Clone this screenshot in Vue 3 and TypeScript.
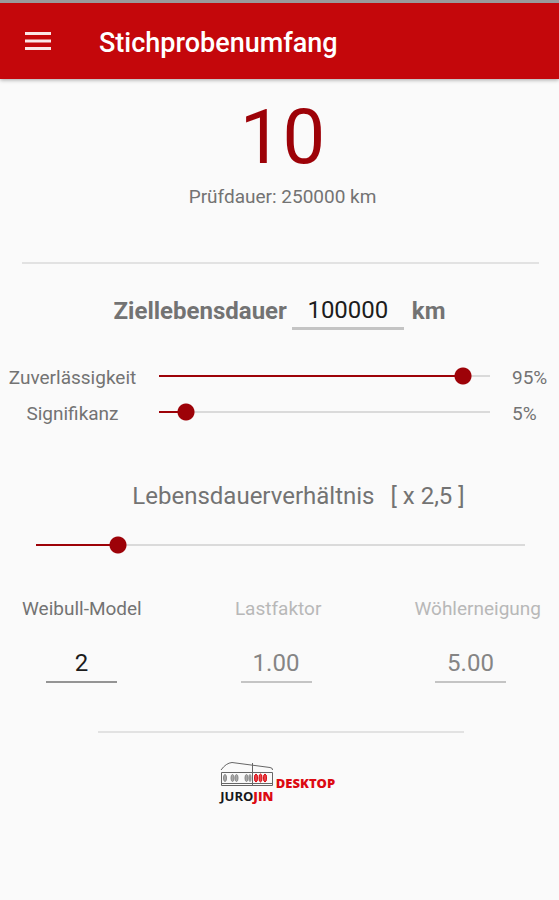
<script setup lang="ts">
import { computed, ref } from 'vue'

const target = ref('100000')
const reliability = ref(95)
const significance = ref(5)
const ratio = ref(2.5)
const weibull = ref('2')
const loadFactor = ref('1.00')
const woehler = ref('5.00')

const sampleSize = ref(10)
const testDuration = computed(() => Math.round(Number(target.value) * ratio.value))
const ratioText = computed(() => ratio.value.toLocaleString('de-DE'))

const fill = (value: number, min: number, max: number) => ({
  '--fill': (value - min) / (max - min),
})
</script>

<template>
  <div class="screen">
    <header class="bar">
      <button class="menu" type="button" aria-label="Menü">
        <svg width="26" height="20" viewBox="0 0 26 20" aria-hidden="true">
          <path d="M0 2.500h26M0 10h26M0 17.500h26" stroke="currentColor" stroke-width="3" />
        </svg>
      </button>
      <h1>Stichprobenumfang</h1>
    </header>

    <main>
      <section class="result">
        <output class="size">{{ sampleSize }}</output>
        <p>Prüfdauer: {{ testDuration }} km</p>
      </section>

      <hr />

      <div class="target">
        <label for="target">Ziellebensdauer</label>
        <input id="target" v-model="target" type="text" inputmode="numeric" />
        <span>km</span>
      </div>

      <div class="sliders">
        <label for="reliability">Zuverlässigkeit</label>
        <input
          id="reliability"
          v-model.number="reliability"
          type="range"
          min="0"
          max="100"
          :style="fill(reliability, 0, 100)"
        />
        <span>{{ reliability }}%</span>
        <label for="significance">Signifikanz</label>
        <input
          id="significance"
          v-model.number="significance"
          type="range"
          min="0"
          max="100"
          :style="fill(significance, 0, 100)"
        />
        <span>{{ significance }}%</span>
      </div>

      <div class="ratio">
        <label for="ratio">
          <span>Lebensdauerverhältnis</span>
          <span>[ x {{ ratioText }} ]</span>
        </label>
        <input
          id="ratio"
          v-model.number="ratio"
          type="range"
          min="1"
          max="11"
          step="0.1"
          :style="fill(ratio, 1, 11)"
        />
      </div>

      <div class="labels">
        <label for="weibull">Weibull-Model</label>
        <label class="off" for="load">Lastfaktor</label>
        <label class="off" for="woehler">Wöhlerneigung</label>
      </div>
      <div class="values">
        <input id="weibull" v-model="weibull" type="text" inputmode="decimal" />
        <input id="load" v-model="loadFactor" type="text" disabled />
        <input id="woehler" v-model="woehler" type="text" disabled />
      </div>

      <hr class="short" />

      <a class="logo" href="#">
        <span class="mark">
          <svg width="54" height="26" viewBox="0 0 54 26" aria-hidden="true">
            <g fill="none" stroke="#666" stroke-width="1">
              <path d="M1 9Q6 2 12 1.500L50 6.500Q53 7 52.500 9" />
              <path d="M1.500 11.500h51v13h-51zM1 22.500h51M32.500 2v22" />
            </g>
            <g fill="#aaa" stroke="#888">
              <ellipse cx="5" cy="17" rx="1.500" ry="3.500" />
              <ellipse cx="12.500" cy="17" rx="1.500" ry="3.500" />
              <ellipse cx="16.500" cy="17" rx="1.500" ry="3.500" />
              <ellipse cx="26.500" cy="17" rx="1.500" ry="3.500" />
              <ellipse cx="30" cy="17" rx="1" ry="3.500" />
            </g>
            <g fill="#e5484d" stroke="#dc0a12">
              <ellipse cx="36" cy="17" rx="1.500" ry="4" />
              <ellipse cx="40.500" cy="17" rx="1.500" ry="4" />
              <ellipse cx="45" cy="17" rx="1.500" ry="4" />
            </g>
          </svg>
          <span>JURO<b>JIN</b></span>
        </span>
        <b>DESKTOP</b>
      </a>
    </main>
  </div>
</template>

<style>
body {
  margin: 0;
  background: #fafafa;
}
</style>

<style scoped>
.screen {
  min-height: 100vh;
  background: #fafafa;
  color: #737373;
  font-family: Roboto, "Liberation Sans", sans-serif;
  font-size: 19px;
  line-height: 24px;
}

.bar {
  display: flex;
  align-items: center;
  gap: 48px;
  box-sizing: border-box;
  height: 79px;
  border-top: 3px solid #9a9a9c;
  padding: 0 25px;
  background: #c4070b;
  color: #fff;
  box-shadow: 0 1px 4px rgba(0, 0, 0, 0.35);
}

.menu {
  display: flex;
  padding: 0;
  border: 0;
  background: none;
  color: #fbe6e6;
}

h1 {
  margin: 0;
  padding-top: 3px;
  font-size: 27px;
  font-weight: 500;
  line-height: 32px;
}

main {
  display: flex;
  flex-direction: column;
}

.result {
  display: flex;
  flex-direction: column;
  align-items: center;
  gap: 8px;
  padding: 18px 0 53px 6px;
}

.size {
  color: #9d0208;
  font-size: 76px;
  line-height: 80px;
}

.result p {
  margin: 0;
}

hr {
  height: 2px;
  margin: 0 20px 0 22px;
  border: 0;
  background: #e2e2e2;
}

hr.short {
  margin: 48px 95px 0 98px;
}

input[type="text"] {
  box-sizing: border-box;
  padding: 0;
  border: 0;
  border-bottom: 2px solid #949494;
  border-radius: 0;
  background: none;
  color: #1c1c1c;
  font: inherit;
  font-size: 24px;
  text-align: center;
}

.target {
  display: flex;
  justify-content: center;
  align-items: center;
  margin-top: 28px;
  font-size: 24px;
  font-weight: 700;
}

.target input[type="text"] {
  width: 112px;
  height: 38px;
  margin: 0 8px 0 5px;
  border-bottom: 3px solid #c4c4c4;
  font-weight: 400;
}

.sliders {
  display: grid;
  grid-template-columns: 129px 1fr 37px;
  column-gap: 22px;
  row-gap: 10px;
  align-items: start;
  margin: 34px 10px 0 8px;
}

.sliders label,
.sliders span {
  padding-top: 2px;
}

.sliders label {
  text-align: center;
}

input[type="range"] {
  appearance: none;
  width: 100%;
  height: 24px;
  margin: 0;
  background: none;
}

input[type="range"]::-webkit-slider-runnable-track {
  height: 24px;
  background:
    linear-gradient(#9d0208, #9d0208) left center /
      calc(12px + (100% - 24px) * var(--fill)) 2px no-repeat,
    linear-gradient(#dadada, #dadada) center / 100% 2px no-repeat;
}

input[type="range"]::-webkit-slider-thumb {
  appearance: none;
  width: 24px;
  height: 24px;
  border: 0;
  background: radial-gradient(circle, #9d0208 8px, transparent 9px);
}

.ratio {
  display: flex;
  flex-direction: column;
  gap: 21px;
  margin: 54px 34px 0 36px;
}

.ratio label {
  display: flex;
  justify-content: center;
  gap: 16px;
  padding-left: 36px;
  font-size: 24px;
  line-height: 32px;
}

.labels,
.values {
  display: flex;
  justify-content: space-between;
}

.labels {
  margin: 40px 18px 0 22px;
}

.labels .off {
  color: #b8b8b8;
}

.values {
  margin: 23px 53px 0 46px;
}

.values input[type="text"] {
  width: 71px;
  height: 39px;
}

.values input[type="text"]:disabled {
  border-color: #c4c4c4;
  color: #858585;
}

.logo {
  display: flex;
  align-items: center;
  align-self: center;
  gap: 2px;
  margin-top: 28px;
  padding-right: 4px;
  color: #17171b;
  font-family: "Open Sans", "Liberation Sans", sans-serif;
  font-size: 13px;
  font-weight: 700;
  line-height: 18px;
  text-decoration: none;
}

.logo b {
  color: #dc0a12;
}

.mark {
  display: flex;
  flex-direction: column;
  align-items: center;
}
</style>
